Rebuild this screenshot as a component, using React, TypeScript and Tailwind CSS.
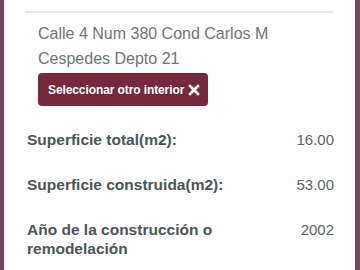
export default function App() {
  return (
    <div
      className="flex h-[270px] w-[360px] overflow-hidden bg-[#70465a] pl-[4px] pr-[5px]"
      style={{ fontFamily: '"Liberation Sans", Arial, sans-serif' }}
    >
      <div className="flex-1 bg-white">
        {/* Divider */}
        <div className="mx-[21px] mt-[11px] h-[2px] bg-[#e6e8ec]" />

        {/* Address */}
        <div className="pl-[34px] pt-[8px]">
          <p className="text-[16px] leading-[25px] text-[#6b7777]">
            Calle 4 Num 380 Cond Carlos M
            <br />
            Cespedes Depto 21
          </p>
          <button className="mt-[2px] flex h-[33px] w-[170px] items-center gap-[4px] whitespace-nowrap rounded-[4px] bg-[#76293d] pl-[10px] text-[12px] font-bold tracking-[-0.1px] text-white">
            <span>Seleccionar otro interior</span>
            <svg width="12" height="12" viewBox="0 0 12 12">
              <path d="M2 2 L10 10 M10 2 L2 10" stroke="white" strokeWidth="2.8" strokeLinecap="round" />
            </svg>
          </button>
        </div>

        {/* Details */}
        <div className="mt-[24px] flex flex-col gap-[26px] pl-[23px] pr-[21px]">
          <div className="flex items-start justify-between text-[15.5px] leading-[19px]">
            <span className="font-bold text-[#4b5656]">Superficie total(m2):</span>
            <span className="text-[15px] text-[#5b6565]">16.00</span>
          </div>
          <div className="flex items-start justify-between text-[15.5px] leading-[19px]">
            <span className="font-bold text-[#4b5656]">Superficie construida(m2):</span>
            <span className="text-[15px] text-[#5b6565]">53.00</span>
          </div>
          <div className="flex items-start justify-between text-[15.5px] leading-[19px]">
            <span className="w-[210px] font-bold text-[#4b5656]">Año de la construcción o remodelación</span>
            <span className="text-[15px] text-[#5b6565]">2002</span>
          </div>
        </div>
      </div>
    </div>
  );
}
